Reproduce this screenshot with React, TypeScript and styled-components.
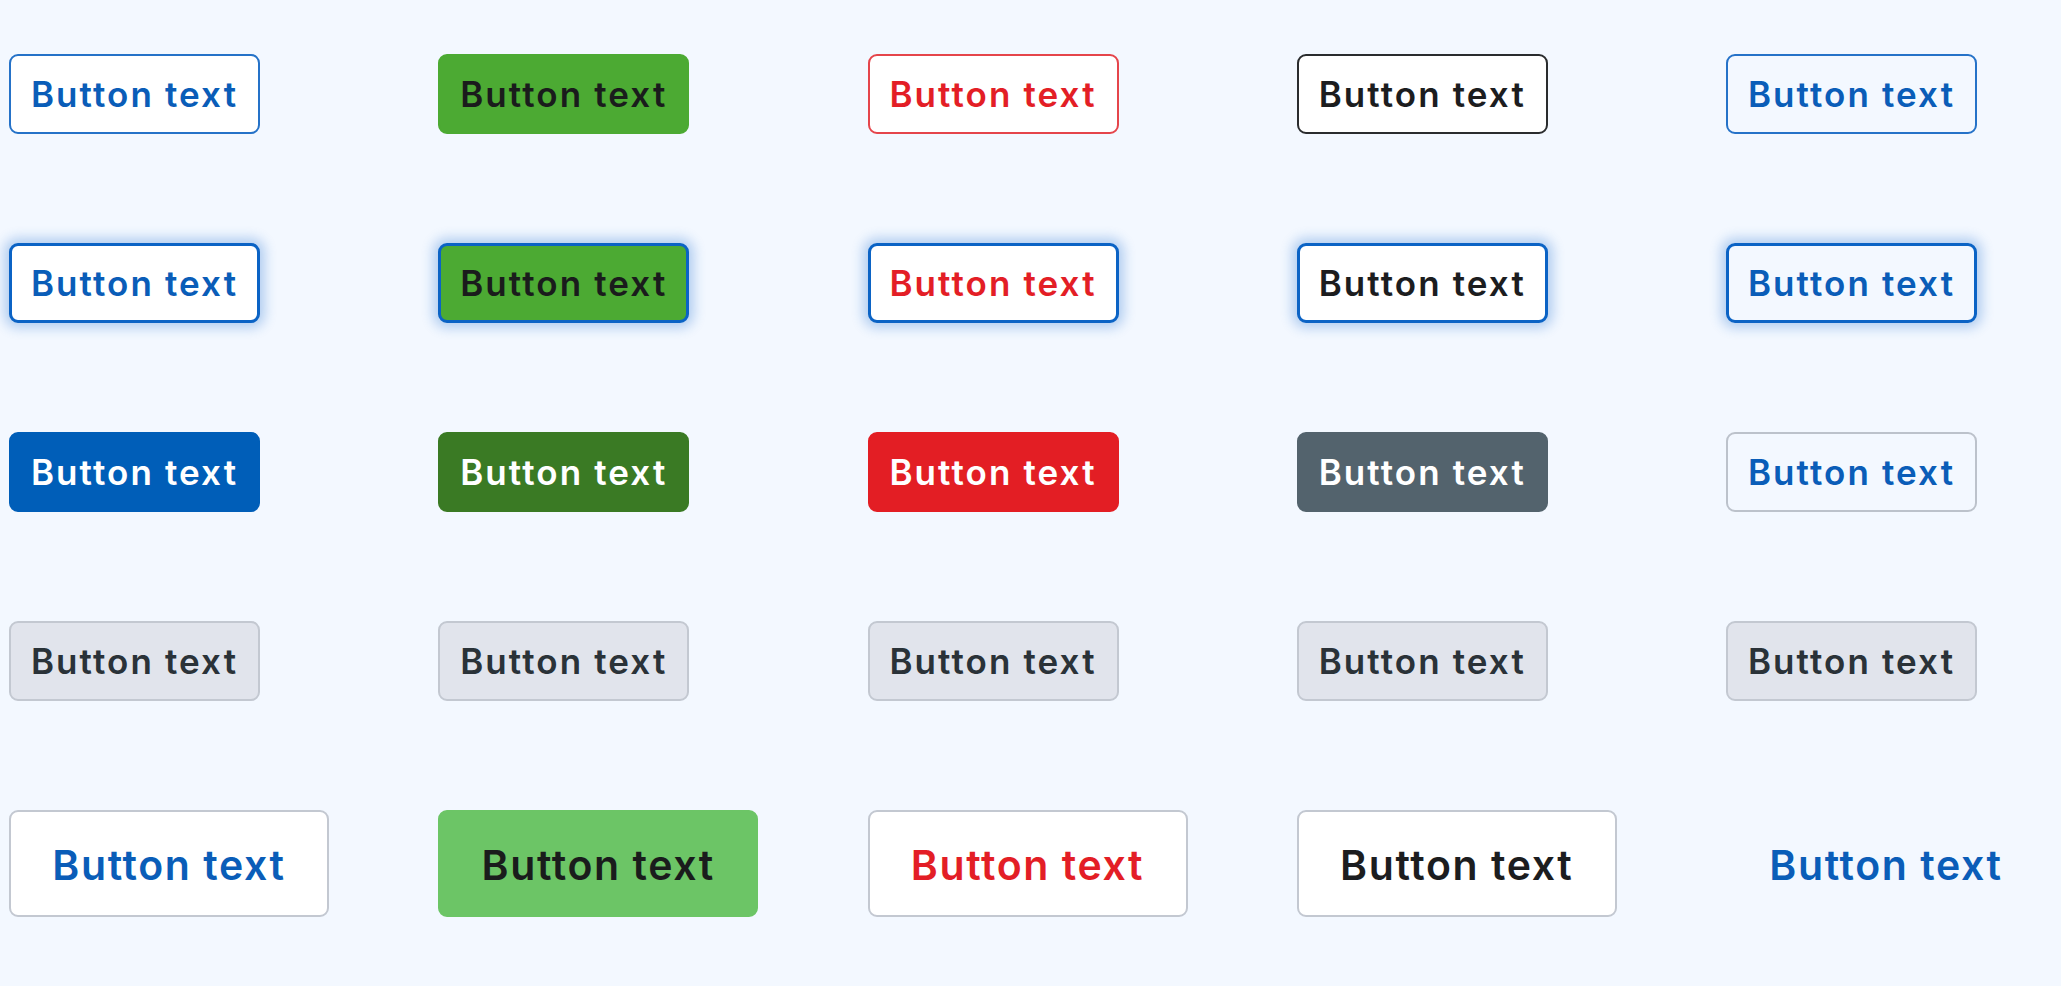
import React from "react";
import styled, { createGlobalStyle, css } from "styled-components";

const GlobalStyle = createGlobalStyle`
  html, body {
    margin: 0;
    padding: 0;
    background: #f3f8ff;
  }
  body {
    font-family: "Inter", "Noto Sans", "Liberation Sans", sans-serif;
  }
`;

const Page = styled.main`
  display: grid;
  grid-template-columns: repeat(5, 429.25px);
  row-gap: 109px;
  padding: 54px 0 0 9px;
  align-items: start;
`;

type Variant =
  | "outlineBlue"
  | "green"
  | "outlineRed"
  | "outlineBlack"
  | "outlineBlueGhost"
  | "solidBlue"
  | "solidDarkGreen"
  | "solidRed"
  | "solidSlate"
  | "grayGhost"
  | "disabled"
  | "largeBlue"
  | "largeGreen"
  | "largeRed"
  | "largeBlack"
  | "textOnly";

const variants: Record<Variant, ReturnType<typeof css>> = {
  outlineBlue: css`
    background: #ffffff;
    border-color: #2572c8;
    color: #0a5db8;
  `,
  green: css`
    background: #4caa33;
    border-color: #4caa33;
    color: #1a1c1c;
  `,
  outlineRed: css`
    background: #ffffff;
    border-color: #e5454b;
    color: #e31e26;
  `,
  outlineBlack: css`
    background: #ffffff;
    border-color: #2a2c2e;
    color: #1c1d1f;
  `,
  outlineBlueGhost: css`
    background: transparent;
    border-color: #2572c8;
    color: #0a5db8;
  `,
  solidBlue: css`
    background: #005eb8;
    border-color: #005eb8;
    color: #ffffff;
  `,
  solidDarkGreen: css`
    background: #3a7a24;
    border-color: #3a7a24;
    color: #ffffff;
  `,
  solidRed: css`
    background: #e31e24;
    border-color: #e31e24;
    color: #ffffff;
  `,
  solidSlate: css`
    background: #53636d;
    border-color: #53636d;
    color: #ffffff;
  `,
  grayGhost: css`
    background: transparent;
    border-color: #bcc2cb;
    color: #0a5db8;
  `,
  disabled: css`
    background: #e1e4ec;
    border-color: #c3c8d1;
    color: #2a3238;
  `,
  largeBlue: css`
    background: #ffffff;
    border-color: #c3c8d1;
    color: #0a5db8;
  `,
  largeGreen: css`
    background: #6cc566;
    border-color: #6cc566;
    color: #1a1c1c;
  `,
  largeRed: css`
    background: #ffffff;
    border-color: #c3c8d1;
    color: #e31e26;
  `,
  largeBlack: css`
    background: #ffffff;
    border-color: #c3c8d1;
    color: #1c1d1f;
  `,
  textOnly: css`
    background: transparent;
    border-color: transparent;
    color: #0a5db8;
  `,
};

const Button = styled.button<{ $variant: Variant; $focused?: boolean; $large?: boolean }>`
  box-sizing: border-box;
  display: flex;
  align-items: center;
  justify-content: center;
  width: ${(p) => (p.$large ? "320px" : "251px")};
  height: ${(p) => (p.$large ? "107px" : "80px")};
  padding: ${(p) => (p.$large ? "3px 0 0" : "0")};
  border: 2px solid;
  border-radius: 9px;
  font-family: inherit;
  font-weight: 600;
  font-size: ${(p) => (p.$large ? "41px" : "35px")};
  letter-spacing: ${(p) => (p.$large ? "1.6px" : "2.1px")};
  line-height: 1;
  white-space: nowrap;
  cursor: pointer;
  ${(p) => variants[p.$variant]}
  ${(p) =>
    p.$focused &&
    css`
      border: 3.5px solid #0b63c5;
      box-shadow: 0 0 12px 5px rgba(30, 110, 205, 0.3);
    `}
`;

const rows: { variant: Variant; focused?: boolean; large?: boolean }[][] = [
  [
    { variant: "outlineBlue" },
    { variant: "green" },
    { variant: "outlineRed" },
    { variant: "outlineBlack" },
    { variant: "outlineBlueGhost" },
  ],
  [
    { variant: "outlineBlue", focused: true },
    { variant: "green", focused: true },
    { variant: "outlineRed", focused: true },
    { variant: "outlineBlack", focused: true },
    { variant: "outlineBlueGhost", focused: true },
  ],
  [
    { variant: "solidBlue" },
    { variant: "solidDarkGreen" },
    { variant: "solidRed" },
    { variant: "solidSlate" },
    { variant: "grayGhost" },
  ],
  [
    { variant: "disabled" },
    { variant: "disabled" },
    { variant: "disabled" },
    { variant: "disabled" },
    { variant: "disabled" },
  ],
  [
    { variant: "largeBlue", large: true },
    { variant: "largeGreen", large: true },
    { variant: "largeRed", large: true },
    { variant: "largeBlack", large: true },
    { variant: "textOnly", large: true },
  ],
];

export default function App() {
  return (
    <>
      <GlobalStyle />
      <Page>
        {rows.flatMap((row, r) =>
          row.map((b, c) => (
            <Button key={`${r}-${c}`} $variant={b.variant} $focused={b.focused} $large={b.large}>
              Button text
            </Button>
          ))
        )}
      </Page>
    </>
  );
}
